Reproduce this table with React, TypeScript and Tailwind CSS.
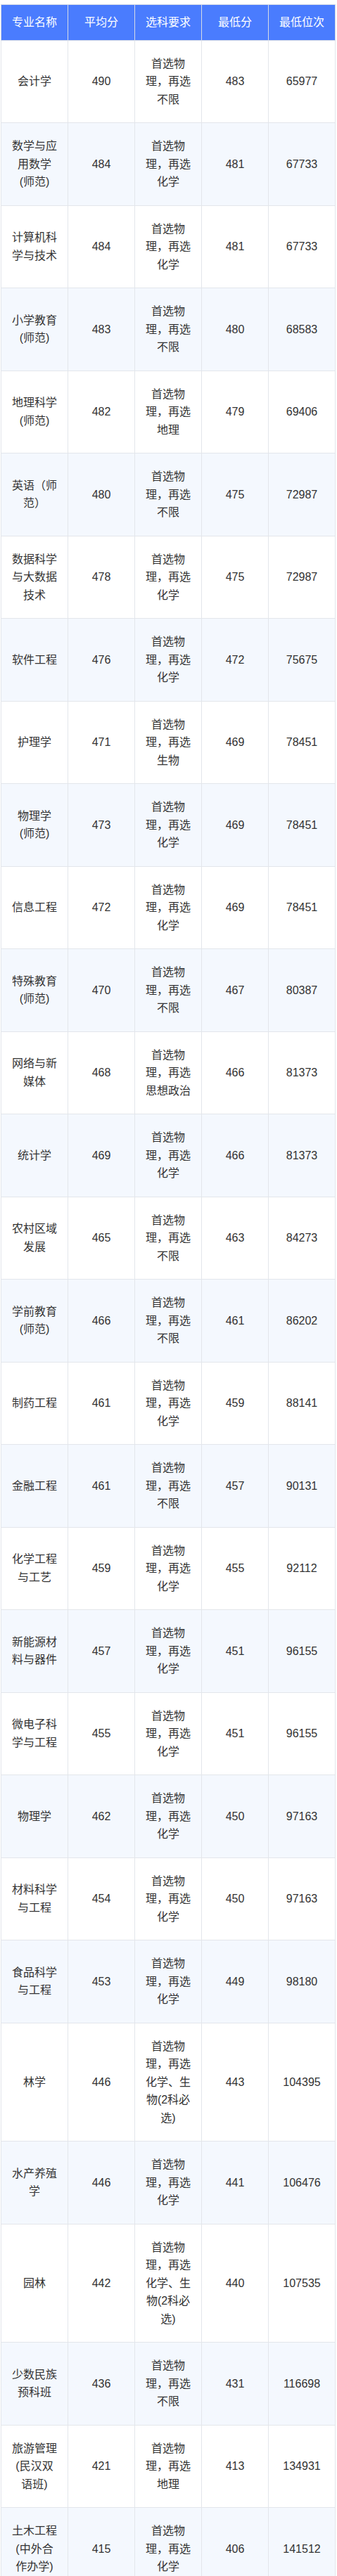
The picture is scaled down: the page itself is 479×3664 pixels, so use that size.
import React from "react";

type Row = [string, string, string, string, string];

const rows: Row[] = [
  ["会计学", "490", "首选物理，再选不限", "483", "65977"],
  ["数学与应用数学(师范)", "484", "首选物理，再选化学", "481", "67733"],
  ["计算机科学与技术", "484", "首选物理，再选化学", "481", "67733"],
  ["小学教育(师范)", "483", "首选物理，再选不限", "480", "68583"],
  ["地理科学(师范)", "482", "首选物理，再选地理", "479", "69406"],
  ["英语（师范）", "480", "首选物理，再选不限", "475", "72987"],
  ["数据科学与大数据技术", "478", "首选物理，再选化学", "475", "72987"],
  ["软件工程", "476", "首选物理，再选化学", "472", "75675"],
  ["护理学", "471", "首选物理，再选生物", "469", "78451"],
  ["物理学(师范)", "473", "首选物理，再选化学", "469", "78451"],
  ["信息工程", "472", "首选物理，再选化学", "469", "78451"],
  ["特殊教育(师范)", "470", "首选物理，再选不限", "467", "80387"],
  ["网络与新媒体", "468", "首选物理，再选思想政治", "466", "81373"],
  ["统计学", "469", "首选物理，再选化学", "466", "81373"],
  ["农村区域发展", "465", "首选物理，再选不限", "463", "84273"],
  ["学前教育(师范)", "466", "首选物理，再选不限", "461", "86202"],
  ["制药工程", "461", "首选物理，再选化学", "459", "88141"],
  ["金融工程", "461", "首选物理，再选不限", "457", "90131"],
  ["化学工程与工艺", "459", "首选物理，再选化学", "455", "92112"],
  ["新能源材料与器件", "457", "首选物理，再选化学", "451", "96155"],
  ["微电子科学与工程", "455", "首选物理，再选化学", "451", "96155"],
  ["物理学", "462", "首选物理，再选化学", "450", "97163"],
  ["材料科学与工程", "454", "首选物理，再选化学", "450", "97163"],
  ["食品科学与工程", "453", "首选物理，再选化学", "449", "98180"],
  ["林学", "446", "首选物理，再选化学、生物(2科必选)", "443", "104395"],
  ["水产养殖学", "446", "首选物理，再选化学", "441", "106476"],
  ["园林", "442", "首选物理，再选化学、生物(2科必选)", "440", "107535"],
  ["少数民族预科班", "436", "首选物理，再选不限", "431", "116698"],
  ["旅游管理(民汉双语班)", "421", "首选物理，再选地理", "413", "134931"],
  ["土木工程(中外合作办学)", "415", "首选物理，再选化学", "406", "141512"],
];

const headers = ["专业名称", "平均分", "选科要求", "最低分", "最低位次"];

export default function App() {
  return (
    <div
      className="bg-white pt-[6px] pl-[1px]"
      style={{ fontFamily: '"Liberation Sans", "Noto Sans CJK SC", sans-serif' }}
    >
      <table className="w-[476px] table-fixed border-collapse text-base text-[#333333]">
        <thead>
          <tr className="bg-[#4a7cfe]">
            {headers.map((h) => (
              <th
                key={h}
                className="border border-[#d6dbe6] px-[14px] py-3 text-center align-middle font-normal leading-[25.5px] text-white"
              >
                {h}
              </th>
            ))}
          </tr>
        </thead>
        <tbody>
          {rows.map((r, i) => (
            <tr key={i} className={i % 2 === 1 ? "bg-[#f4f8fe]" : "bg-white"}>
              {r.map((c, j) => (
                <td
                  key={j}
                  className="border border-[#e3e6eb] px-[14px] py-5 text-center align-middle leading-[25.5px]"
                >
                  {c}
                </td>
              ))}
            </tr>
          ))}
        </tbody>
      </table>
    </div>
  );
}
